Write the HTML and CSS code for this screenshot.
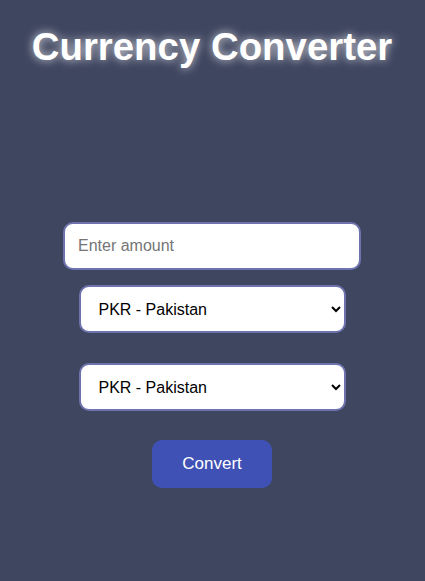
FILE: index.html
```html
<!DOCTYPE html>
<html>
<head>
<meta charset="utf-8">
<title>Currency Converter</title>
<link rel="stylesheet" href="styles.css">
</head>
<body>
<h1 class="title">Currency Converter</h1>
<div class="converter">
  <input class="amount" type="text" placeholder="Enter amount">
  <select class="currency currency-from">
    <option>PKR - Pakistan</option>
  </select>
  <select class="currency currency-to">
    <option>PKR - Pakistan</option>
  </select>
  <button class="convert">Convert</button>
</div>
</body>
</html>
```
FILE: styles.css
```css
html, body {
  margin: 0;
  padding: 0;
  background: #3f4660;
  font-family: "Liberation Sans", Arial, sans-serif;
}
body {
  min-height: 581px;
  padding-right: 1px;
  display: flex;
  flex-direction: column;
  align-items: center;
}
.title {
  margin: 25px 0 0;
  font-size: 38.4px;
  font-weight: bold;
  color: #ffffff;
  text-shadow: 0 0 10px rgba(255, 255, 255, 0.8);
  line-height: 1.15;
}
.converter {
  margin-top: 153px;
  display: flex;
  flex-direction: column;
  align-items: center;
}
.amount {
  box-sizing: border-box;
  width: 298px;
  height: 48px;
  padding: 0 13px;
  border: 2px solid #6e73ae;
  border-radius: 10px;
  font-family: "Liberation Sans", Arial, sans-serif;
  font-size: 16px;
  background: #fff;
  outline: none;
}
.amount::placeholder {
  color: #757575;
}
.currency {
  box-sizing: border-box;
  width: 267px;
  height: 48px;
  padding: 0 13px 0 14px;
  border: 2px solid #6e73ae;
  border-radius: 10px;
  font-family: "Liberation Sans", Arial, sans-serif;
  font-size: 16px;
  color: #000;
  background: #fff;
}
.currency-from {
  margin-top: 15px;
}
.currency-to {
  margin-top: 30px;
}
.convert {
  margin-top: 29px;
  box-sizing: border-box;
  width: 120px;
  height: 48px;
  border: none;
  border-radius: 10px;
  background: #3f51b5;
  color: #fff;
  font-family: "Liberation Sans", Arial, sans-serif;
  font-size: 17px;
}
```
